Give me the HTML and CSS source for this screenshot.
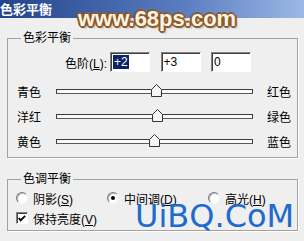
FILE: index.html
```html
<!DOCTYPE html>
<html lang="zh-CN">
<head>
  <meta charset="UTF-8">
  <meta name="viewport" content="width=device-width, initial-scale=1.0">
  <title>色彩平衡</title>
  <link rel="stylesheet" href="styles.css">
</head>
<body>
  <div class="titlebar">色彩平衡</div>

  <div class="dialog">
    <fieldset class="group group-color">
      <legend>色彩平衡</legend>

      <div class="levels">
        <label class="levels-label">色阶(<u>L</u>):</label>
        <div class="field"><span class="selected">+2</span></div>
        <div class="field">+3</div>
        <div class="field">0</div>
      </div>

      <!-- thumb left = (value + 100) / 200 * track width - half thumb -->
      <div class="slider-row">
        <span class="side">青色</span>
        <div class="track">
          <svg class="thumb" style="left: 94px" width="11" height="13" viewBox="0 0 11 13"><polygon points="0.5,5.5 5.5,0.5 10.5,5.5 10.5,12.5 0.5,12.5"/></svg>
        </div>
        <span class="side right">红色</span>
      </div>
      <div class="slider-row">
        <span class="side">洋红</span>
        <div class="track">
          <svg class="thumb" style="left: 95px" width="11" height="13" viewBox="0 0 11 13"><polygon points="0.5,5.5 5.5,0.5 10.5,5.5 10.5,12.5 0.5,12.5"/></svg>
        </div>
        <span class="side right">绿色</span>
      </div>
      <div class="slider-row">
        <span class="side">黄色</span>
        <div class="track">
          <svg class="thumb" style="left: 92px" width="11" height="13" viewBox="0 0 11 13"><polygon points="0.5,5.5 5.5,0.5 10.5,5.5 10.5,12.5 0.5,12.5"/></svg>
        </div>
        <span class="side right">蓝色</span>
      </div>
    </fieldset>

    <fieldset class="group group-tone">
      <legend>色调平衡</legend>
      <div class="radios">
        <label class="radio"><span class="dot"></span><span>阴影(<u>S</u>)</span></label>
        <label class="radio checked"><span class="dot"></span><span>中间调(<u>D</u>)</span></label>
        <label class="radio"><span class="dot"></span><span>高光(<u>H</u>)</span></label>
      </div>
      <label class="check">
        <span class="box"><svg width="11" height="11" viewBox="0 0 11 11"><polyline points="2,5 4,7.5 9,2.5"/></svg></span>
        <span>保持亮度(<u>V</u>)</span>
      </label>
    </fieldset>
  </div>

  <div class="mark-top">www.68ps.com</div>
  <div class="mark-bottom">UiBQ.CoM</div>
</body>
</html>
```

FILE: styles.css
```css
* {
  margin: 0;
  padding: 0;
  box-sizing: border-box;
}

body {
  font-family: 'Liberation Sans', 'Noto Sans CJK SC', sans-serif;
  font-size: 12px;
  background: #efefef;
  color: #000;
  position: relative;
  width: 304px;
  height: 241px;
  overflow: hidden;
}

u {
  text-decoration: underline;
}

.titlebar {
  height: 18px;
  line-height: 17px;
  background: linear-gradient(90deg, #23448a, #5a7cc0 60%, #9cb8e6);
  color: #fff;
  font-family: 'Noto Sans CJK SC', sans-serif;
  font-size: 13px;
  font-weight: 700;
}

.dialog {
  padding-top: 13px;
}

/* group boxes */
.group {
  margin: 0 6px 0 7px;
  border: 1px solid #a2a2a2;
  box-shadow: 1px 1px 0 #fff;
  min-width: 0;
}

.group legend {
  margin-left: 13px;
  padding: 0 2px;
  line-height: 14px;
  background: #efefef;
}

.group-color {
  padding-bottom: 3px;
}

.group-tone {
  margin-top: 14px;
  padding-bottom: 2px;
}

/* levels row */
.levels {
  display: flex;
  align-items: center;
  gap: 10.5px;
  height: 20px;
  margin-top: 7px;
  margin-bottom: 7px;
}

.levels-label {
  width: 99px;
  margin-right: -7.5px;
  text-align: right;
}

.field {
  width: 40px;
  height: 20px;
  display: flex;
  align-items: center;
  padding-left: 2px;
  background: #fff;
  border: 1px solid;
  border-color: #808080 #fff #fff #808080;
  box-shadow: inset 1px 1px 0 #404040;
}

.selected {
  background: #0a246a;
  color: #fff;
  line-height: 14px;
  padding: 0 1px;
}

/* sliders */
.slider-row {
  display: grid;
  grid-template-columns: 39px 197px auto;
  align-items: center;
  height: 25px;
  padding-left: 9px;
}

.side.right {
  margin-left: 14px;
}

.track {
  position: relative;
  height: 5px;
  background: #fafafa;
  border: 1px solid #3c3c3c;
  border-bottom-color: #5a5a5a;
}

.thumb {
  position: absolute;
  top: -6px;
  display: block;
}

.thumb polygon {
  fill: #f6f6f6;
  stroke: #333;
  stroke-width: 1;
}

/* tone balance */
.radios {
  display: flex;
  align-items: center;
  height: 20px;
  margin-top: 2px;
  padding-left: 8px;
}

.radio {
  display: flex;
  align-items: center;
  gap: 5px;
}

.radio:nth-child(1) {
  width: 91px;
}

.radio:nth-child(2) {
  width: 101px;
}

.dot {
  position: relative;
  width: 12px;
  height: 12px;
  border-radius: 50%;
  background: #fff;
  border: 1px solid;
  border-color: #7c7c7c #f4f4f4 #f4f4f4 #7c7c7c;
  box-shadow: inset 1px 1px 0 #b8b8b8;
}

.radio.checked .dot::after {
  content: '';
  position: absolute;
  left: 3px;
  top: 3px;
  width: 4px;
  height: 4px;
  border-radius: 50%;
  background: #000;
}

.check {
  display: flex;
  align-items: center;
  gap: 5px;
  height: 20px;
  padding-left: 8px;
}

.box {
  width: 12px;
  height: 12px;
  background: #fff;
  border: 1px solid;
  border-color: #808080 #fff #fff #808080;
  box-shadow: inset 1px 1px 0 #404040;
  display: flex;
  align-items: center;
  justify-content: center;
}

.box svg {
  display: block;
}

.box polyline {
  fill: none;
  stroke: #000;
  stroke-width: 2;
}

/* watermarks over the dialog */
.mark-top {
  position: absolute;
  left: 78px;
  top: 8px;
  font-family: 'Liberation Sans', sans-serif;
  font-size: 22px;
  font-weight: 700;
  line-height: 22px;
  color: #fff4e2;
  text-shadow:
    -1px -1px 0 #8a5a2c, 1px -1px 0 #8a5a2c,
    -1px 1px 0 #8a5a2c, 1px 1px 0 #8a5a2c,
    -2px 0 0 #8a5a2c, 2px 0 0 #8a5a2c,
    0 -2px 0 #8a5a2c, 0 2px 0 #8a5a2c,
    2px 2px 2px rgba(80, 50, 20, 0.5);
}

.mark-bottom {
  position: absolute;
  left: 135px;
  top: 200px;
  font-family: 'DejaVu Sans', sans-serif;
  font-size: 32px;
  line-height: 32px;
  color: #1e6ad0;
}
```
